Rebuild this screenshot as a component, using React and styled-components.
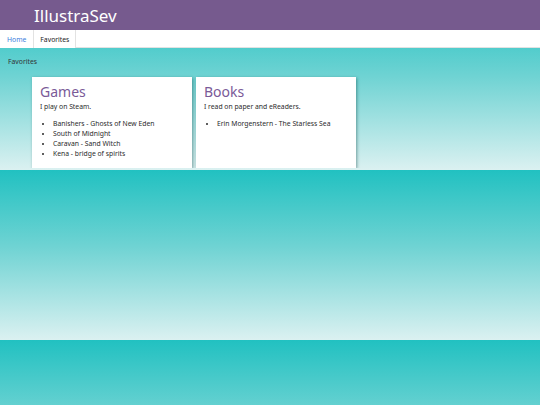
import React from 'react'
import styled, { createGlobalStyle } from 'styled-components'

const GlobalStyle = createGlobalStyle`
  html {
    min-height: 100%;
    background: linear-gradient(to bottom, #21c1c1 0%, #6fd3d3 45%, #dbf1f1 100%);
    background-size: 100% 170px;
    background-repeat: repeat;
  }
  body {
    margin: 0;
    font-family: "Noto Sans", "Open Sans", sans-serif;
    color: #2a2a2a;
  }
`

const Header = styled.header`
  height: 30px;
  background: #765a8e;
  display: flex;
  align-items: center;
  padding-left: 34px;
`

const Brand = styled.h1`
  margin: 0;
  font-size: 17px;
  font-weight: 400;
  color: #fff;
  line-height: 1;
`

const Nav = styled.nav`
  height: 18px;
  background: #fff;
  display: flex;
  align-items: stretch;
  border-bottom: 1px solid #e2e2e2;
  box-sizing: border-box;
`

const Tab = styled.a`
  display: flex;
  align-items: center;
  padding: 0 6px;
  font-size: 6.8px;
  text-decoration: none;
  color: ${(p) => (p.active ? '#222' : '#3b7ddd')};
  border-left: 1px solid ${(p) => (p.active ? '#e2e2e2' : 'transparent')};
  border-right: 1px solid ${(p) => (p.active ? '#e2e2e2' : 'transparent')};
  margin-bottom: -1px;
  background: #fff;
`

const Main = styled.main`
  padding: 9px 8px 0;
`

const Crumb = styled.div`
  font-size: 6.8px;
  color: #333;
  line-height: 10px;
`

const Cards = styled.div`
  display: flex;
  gap: 4px;
  margin: 10px 0 0 24px;
`

const Card = styled.section`
  width: 160px;
  height: 91px;
  box-sizing: border-box;
  background: #fff;
  padding: 5px 8px 4px;
  box-shadow: 1px 1px 3px rgba(0, 60, 60, 0.45);
`

const Title = styled.h2`
  margin: 0;
  font-size: 14px;
  font-weight: 400;
  color: #7a5a98;
  line-height: 20px;
`

const Lead = styled.p`
  margin: 0 0 7px;
  font-size: 6.8px;
  line-height: 10px;
`

const List = styled.ul`
  margin: 0;
  padding-left: 13px;
  font-size: 6.8px;
  line-height: 10px;
`

const data = [
  {
    title: 'Games',
    lead: 'I play on Steam.',
    items: [
      'Banishers - Ghosts of New Eden',
      'South of Midnight',
      'Caravan - Sand Witch',
      'Kena - bridge of spirits'
    ]
  },
  {
    title: 'Books',
    lead: 'I read on paper and eReaders.',
    items: ['Erin Morgenstern - The Starless Sea']
  }
]

export default function App() {
  return (
    <>
      <GlobalStyle />
      <Header>
        <Brand>IllustraSev</Brand>
      </Header>
      <Nav>
        <Tab href="#">Home</Tab>
        <Tab href="#" active>
          Favorites
        </Tab>
      </Nav>
      <Main>
        <Crumb>Favorites</Crumb>
        <Cards>
          {data.map((c) => (
            <Card key={c.title}>
              <Title>{c.title}</Title>
              <Lead>{c.lead}</Lead>
              <List>
                {c.items.map((i) => (
                  <li key={i}>{i}</li>
                ))}
              </List>
            </Card>
          ))}
        </Cards>
      </Main>
    </>
  )
}
